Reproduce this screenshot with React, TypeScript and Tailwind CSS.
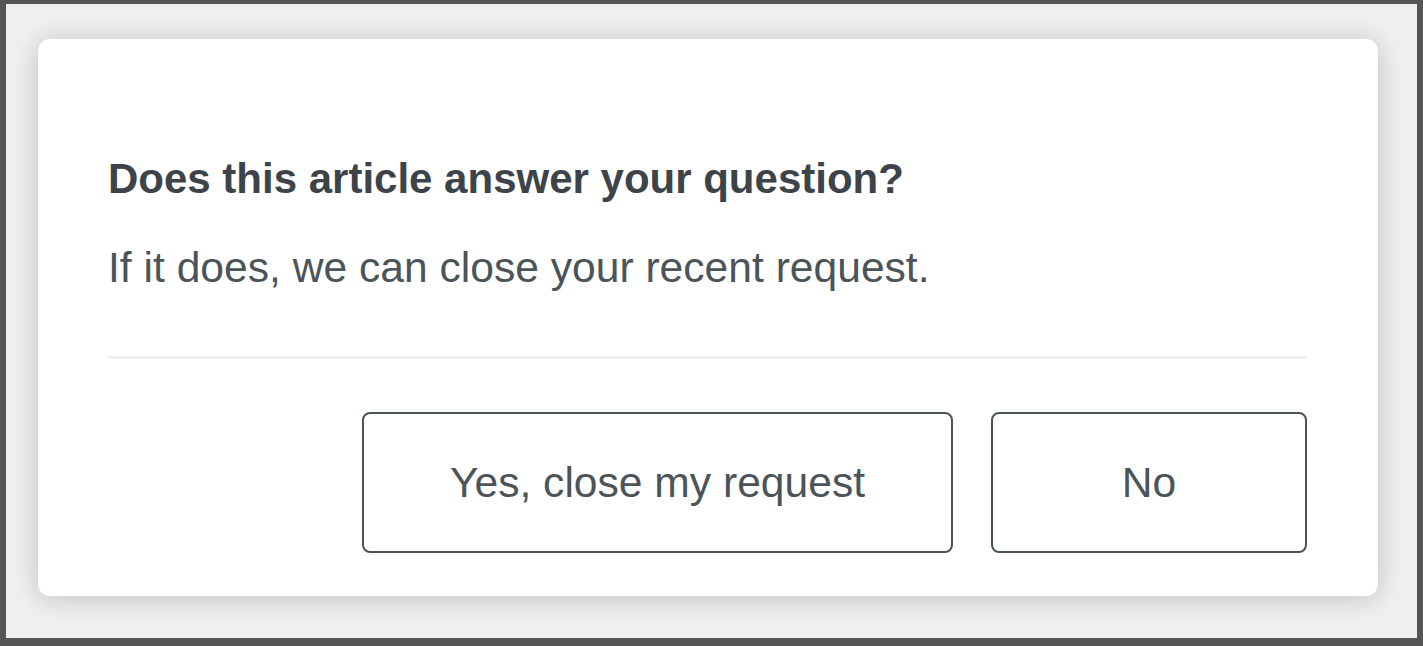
export default function App() {
  return (
    <div
      className="w-[1423px] h-[646px] bg-[#555555] pt-[4px] pl-[6px] pr-[6px] pb-[8px] flex"
      style={{ fontFamily: '"Liberation Sans", Arial, sans-serif' }}
    >
      <div className="flex-1 bg-[#efefef] pl-[32px] pt-[35px] pr-[39px] pb-[42px] flex">
        <div className="flex-1 bg-white rounded-[12px] shadow-[0_2px_26px_rgba(0,0,0,0.2)] pl-[70px] pr-[71px] pt-[116px] pb-[43px] flex flex-col">
          <h2 className="text-[42px] leading-[48px] font-bold text-[#3c444a]">
            Does this article answer your question?
          </h2>
          <p className="mt-[40px] text-[42.6px] leading-[48px] text-[#4b5459]">
            If it does, we can close your recent request.
          </p>
          <div className="mt-[65px] h-[3px] bg-[#eef0f1]" />
          <div className="mt-[53px] flex justify-end gap-[38px]">
            <button className="w-[591px] h-[141px] border-2 border-[#4b5459] rounded-[8px] text-[42.6px] text-[#4b5459] bg-white">
              Yes, close my request
            </button>
            <button className="w-[316px] h-[141px] border-2 border-[#4b5459] rounded-[8px] text-[42.6px] text-[#4b5459] bg-white">
              No
            </button>
          </div>
        </div>
      </div>
    </div>
  );
}
